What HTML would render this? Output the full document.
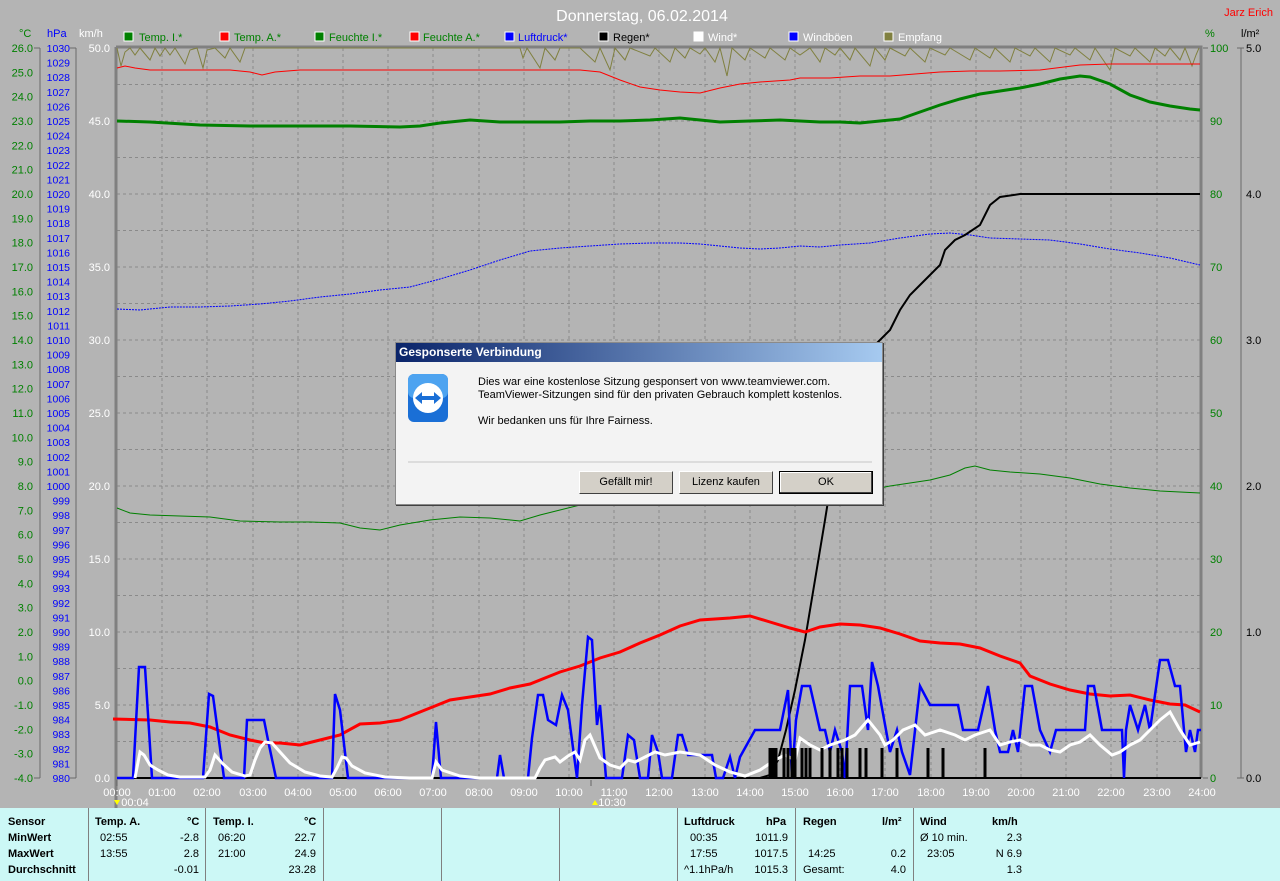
<!DOCTYPE html>
<html><head><meta charset="utf-8"><style>
body{margin:0;width:1280px;height:881px;overflow:hidden;background:#b4b4b4;font-family:"Liberation Sans",sans-serif;}
svg{position:absolute;left:0;top:0}
.panel{position:absolute;left:0;top:808px;width:1280px;height:73px;background:#ccf8f6;font-size:11px;color:#000}
.dv{position:absolute;top:0;width:1px;height:73px;background:#808080}
.t{position:absolute;white-space:nowrap}
.b{font-weight:bold}
.dlg{position:absolute;left:395px;top:342px;width:486px;height:161px;background:#f3f3f3;border:1px solid #8a8a8a;box-shadow:1px 1px 0 #404040;font-size:11px}
.tb{height:19px;background:linear-gradient(90deg,#0a246a,#a6caf0);color:#fff;font-weight:bold;font-size:12px;line-height:19px;padding-left:3px}
.btn{position:absolute;top:128px;width:92px;height:21px;background:#d4d0c8;border:1px solid;border-color:#fff #404040 #404040 #fff;text-align:center;line-height:21px;font-size:11px}
</style></head><body>
<svg width="1280" height="808" font-family="Liberation Sans, sans-serif" font-size="11">
<text x="642" y="21" fill="#fff" font-size="16" text-anchor="middle">Donnerstag, 06.02.2014</text>
<text x="1273" y="16" fill="#f00" font-size="11" text-anchor="end">Jarz Erich</text>
<g font-size="11">
<rect x="124" y="32" width="9" height="9" fill="#008000" stroke="#fff"/><text x="139" y="41" fill="#008000">Temp. I.*</text>
<rect x="220" y="32" width="9" height="9" fill="#f00" stroke="#fff"/><text x="234" y="41" fill="#008000">Temp. A.*</text>
<rect x="315" y="32" width="9" height="9" fill="#008000" stroke="#fff"/><text x="329" y="41" fill="#008000">Feuchte I.*</text>
<rect x="410" y="32" width="9" height="9" fill="#f00" stroke="#fff"/><text x="423" y="41" fill="#008000">Feuchte A.*</text>
<rect x="505" y="32" width="9" height="9" fill="#00f" stroke="#fff"/><text x="518" y="41" fill="#00f">Luftdruck*</text>
<rect x="599" y="32" width="9" height="9" fill="#000" stroke="#fff"/><text x="613" y="41" fill="#000">Regen*</text>
<rect x="694" y="32" width="9" height="9" fill="#fff" stroke="#fff"/><text x="708" y="41" fill="#fff">Wind*</text>
<rect x="789" y="32" width="9" height="9" fill="#00f" stroke="#fff"/><text x="803" y="41" fill="#fff">Windböen</text>
<rect x="884" y="32" width="9" height="9" fill="#808040" stroke="#fff"/><text x="898" y="41" fill="#fff">Empfang</text>
</g>
<text x="19" y="37" fill="#008000">°C</text><text x="47" y="37" fill="#00f">hPa</text><text x="79" y="37" fill="#fff">km/h</text>
<text x="1205" y="37" fill="#008000">%</text><text x="1241" y="37" fill="#000">l/m²</text>
<g stroke="#8a8a8a" stroke-dasharray="3,3" stroke-width="1">
<path d="M117 84.5H1201M117 121H1201M117 157.5H1201M117 194H1201M117 230.5H1201M117 267H1201M117 303.5H1201M117 340H1201M117 376.5H1201M117 413H1201M117 449.5H1201M117 486H1201M117 522.5H1201M117 559H1201M117 595.5H1201M117 632H1201M117 668.5H1201M117 705H1201M117 741.5H1201"/>
<path d="M162 48V778M207 48V778M253 48V778M298 48V778M343 48V778M388 48V778M433 48V778M479 48V778M524 48V778M569 48V778M614 48V778M659 48V778M705 48V778M750 48V778M795 48V778M840 48V778M885 48V778M931 48V778M976 48V778M1021 48V778M1066 48V778M1111 48V778M1157 48V778"/>
</g>
<g stroke="#6a6a6a" fill="none">
<path d="M40 48V778M34 48H40M34 778H40M76 48V778M70 48H76M70 778H76" />
<path d="M1241 48V778M1237 48H1244M1237 778H1244M1203 48H1208M1203 778H1208"/>
</g>
<path d="M116 47V808M116 47H1201V778" stroke="#808080" stroke-width="3" fill="none"/>
<path d="M117 778H1201" stroke="#000" stroke-width="2"/>
<g fill="#008000" text-anchor="end">
<text x="33" y="52">26.0</text><text x="33" y="76.3">25.0</text><text x="33" y="100.7">24.0</text><text x="33" y="125">23.0</text><text x="33" y="149.3">22.0</text><text x="33" y="173.7">21.0</text><text x="33" y="198">20.0</text><text x="33" y="222.3">19.0</text><text x="33" y="246.7">18.0</text><text x="33" y="271">17.0</text><text x="33" y="295.3">16.0</text><text x="33" y="319.7">15.0</text><text x="33" y="344">14.0</text><text x="33" y="368.3">13.0</text><text x="33" y="392.7">12.0</text><text x="33" y="417">11.0</text><text x="33" y="441.3">10.0</text><text x="33" y="465.7">9.0</text><text x="33" y="490">8.0</text><text x="33" y="514.3">7.0</text><text x="33" y="538.7">6.0</text><text x="33" y="563">5.0</text><text x="33" y="587.3">4.0</text><text x="33" y="611.7">3.0</text><text x="33" y="636">2.0</text><text x="33" y="660.3">1.0</text><text x="33" y="684.7">0.0</text><text x="33" y="709">-1.0</text><text x="33" y="733.3">-2.0</text><text x="33" y="757.7">-3.0</text><text x="33" y="782">-4.0</text>
</g>
<g fill="#00f" text-anchor="end" font-size="10.5">
<text x="70" y="52">1030</text><text x="70" y="66.6">1029</text><text x="70" y="81.2">1028</text><text x="70" y="95.8">1027</text><text x="70" y="110.4">1026</text><text x="70" y="125">1025</text><text x="70" y="139.6">1024</text><text x="70" y="154.2">1023</text><text x="70" y="168.8">1022</text><text x="70" y="183.4">1021</text><text x="70" y="198">1020</text><text x="70" y="212.6">1019</text><text x="70" y="227.2">1018</text><text x="70" y="241.8">1017</text><text x="70" y="256.4">1016</text><text x="70" y="271">1015</text><text x="70" y="285.6">1014</text><text x="70" y="300.2">1013</text><text x="70" y="314.8">1012</text><text x="70" y="329.4">1011</text><text x="70" y="344">1010</text><text x="70" y="358.6">1009</text><text x="70" y="373.2">1008</text><text x="70" y="387.8">1007</text><text x="70" y="402.4">1006</text><text x="70" y="417">1005</text><text x="70" y="431.6">1004</text><text x="70" y="446.2">1003</text><text x="70" y="460.8">1002</text><text x="70" y="475.4">1001</text><text x="70" y="490">1000</text><text x="70" y="504.6">999</text><text x="70" y="519.2">998</text><text x="70" y="533.8">997</text><text x="70" y="548.4">996</text><text x="70" y="563">995</text><text x="70" y="577.6">994</text><text x="70" y="592.2">993</text><text x="70" y="606.8">992</text><text x="70" y="621.4">991</text><text x="70" y="636">990</text><text x="70" y="650.6">989</text><text x="70" y="665.2">988</text><text x="70" y="679.8">987</text><text x="70" y="694.4">986</text><text x="70" y="709">985</text><text x="70" y="723.6">984</text><text x="70" y="738.2">983</text><text x="70" y="752.8">982</text><text x="70" y="767.4">981</text><text x="70" y="782">980</text>
</g>
<g fill="#fff" text-anchor="end">
<text x="110" y="52">50.0</text><text x="110" y="125">45.0</text><text x="110" y="198">40.0</text><text x="110" y="271">35.0</text><text x="110" y="344">30.0</text><text x="110" y="417">25.0</text><text x="110" y="490">20.0</text><text x="110" y="563">15.0</text><text x="110" y="636">10.0</text><text x="110" y="709">5.0</text><text x="110" y="782">0.0</text>
</g>
<g fill="#008000">
<text x="1210" y="52">100</text><text x="1210" y="125">90</text><text x="1210" y="198">80</text><text x="1210" y="271">70</text><text x="1210" y="344">60</text><text x="1210" y="417">50</text><text x="1210" y="490">40</text><text x="1210" y="563">30</text><text x="1210" y="636">20</text><text x="1210" y="709">10</text><text x="1210" y="782">0</text>
</g>
<g fill="#000">
<text x="1246" y="52">5.0</text><text x="1246" y="198">4.0</text><text x="1246" y="344">3.0</text><text x="1246" y="490">2.0</text><text x="1246" y="636">1.0</text><text x="1246" y="782">0.0</text>
</g>
<g fill="#fff" text-anchor="middle">
<text x="117" y="796">00:00</text><text x="162" y="796">01:00</text><text x="207" y="796">02:00</text><text x="253" y="796">03:00</text><text x="298" y="796">04:00</text><text x="343" y="796">05:00</text><text x="388" y="796">06:00</text><text x="433" y="796">07:00</text><text x="479" y="796">08:00</text><text x="524" y="796">09:00</text><text x="569" y="796">10:00</text><text x="614" y="796">11:00</text><text x="659" y="796">12:00</text><text x="705" y="796">13:00</text><text x="750" y="796">14:00</text><text x="795" y="796">15:00</text><text x="840" y="796">16:00</text><text x="885" y="796">17:00</text><text x="931" y="796">18:00</text><text x="976" y="796">19:00</text><text x="1021" y="796">20:00</text><text x="1066" y="796">21:00</text><text x="1111" y="796">22:00</text><text x="1157" y="796">23:00</text><text x="1202" y="796">24:00</text>
<text x="135" y="806">00:04</text><text x="612" y="806">10:30</text>
</g>
<path d="M114 800l3 5 3-5z" fill="#ff0"/><path d="M592 805l3-5 3 5z" fill="#ff0"/>
<path d="M117 780v6M591 780v6" stroke="#666"/>
<polyline fill="none" stroke="#808040" points="117,48 121,66 125,52 130,48 135,55 140,48 150,60 155,48 160,56 165,48 170,55 175,48 185,64 190,50 197,48 203,68 207,50 215,48 225,58 230,48 240,62 245,48 270,48 290,48 300,48 320,48 340,48 400,48 420,48 430,48 450,48 520,48 523,58 527,48 540,68 545,48 555,60 560,48 580,48 595,62 600,48 610,70 615,48 625,60 630,48 650,56 655,48 670,62 675,48 685,58 690,48 700,54 705,48 715,62 720,48 727,76 732,48 745,60 750,48 765,58 770,48 785,60 790,48 800,55 810,48 820,62 825,48 835,55 840,48 850,60 855,48 870,66 875,48 885,60 890,48 905,56 910,48 925,62 930,48 945,55 950,48 970,60 975,48 990,58 995,48 1010,62 1015,48 1030,56 1035,48 1050,62 1055,48 1070,55 1075,48 1090,60 1095,48 1110,70 1115,48 1130,56 1135,48 1150,62 1155,48 1165,56 1170,48 1180,60 1185,48 1192,66 1196,55 1199,48"/>
<polyline fill="none" stroke="#f00" points="117,68 125,66 135,68 150,70 200,70 230,70 250,72 262,75 275,72 300,70 330,70 400,70 580,70 600,72 620,80 640,87 660,90 680,92 700,93 720,88 740,84 760,82 790,80 800,78 830,78 860,76 890,76 915,74 940,72 970,71 1000,71 1040,70 1080,65 1110,64 1200,64"/>
<polyline fill="none" stroke="#008000" stroke-width="3" points="117,121 150,122 200,125 250,126 300,126 350,126 400,127 420,126 440,123 470,120 500,122 530,122 560,122 590,121 620,121 650,120 680,118 700,120 720,122 750,121 780,120 800,121 820,122 840,122 860,123 880,121 900,119 920,112 940,105 960,99 980,94 1000,91 1020,88 1040,84 1060,79 1080,76 1090,77 1110,84 1130,95 1150,102 1170,106 1190,109 1200,110"/>
<polyline fill="none" stroke="#00f" stroke-dasharray="2,1" points="117,309 140,310 170,307 200,307 230,306 260,304 290,301 320,297 350,294 380,290 410,287 440,279 470,270 500,260 530,251 560,248 590,246 620,244 650,243 680,243 700,244 720,246 740,248 760,249 780,248 800,246 820,247 840,245 870,243 900,238 930,234 950,233 970,235 990,238 1020,239 1050,240 1080,244 1110,249 1140,253 1170,258 1200,265"/>
<polyline fill="none" stroke="#008000" points="117,508 130,513 150,515 180,516 210,517 240,521 280,522 310,522 340,523 360,528 380,530 400,525 430,520 460,517 490,518 520,521 540,515 560,510 580,505 600,500 840,495 870,490 890,486 910,483 930,480 950,475 965,468 975,466 990,470 1010,472 1040,474 1070,478 1100,484 1130,488 1160,491 1200,493"/>
<polyline fill="none" stroke="#000" stroke-width="2" points="117,778 760,778 770,775 778,760 786,730 795,690 805,640 815,580 825,520 833,470 840,420 850,380 860,360 875,345 890,330 900,310 910,295 920,285 930,275 940,265 945,250 955,240 965,235 980,225 990,205 1000,197 1020,194 1200,194"/>
<polyline fill="none" stroke="#f00" stroke-width="3" points="113,719 150,720 170,722 190,723 210,727 230,735 250,740 265,743 280,743 300,745 320,740 340,735 360,724 380,723 400,720 420,712 435,706 450,700 470,697 490,694 510,688 530,684 545,678 560,672 580,666 600,658 620,652 640,643 660,635 680,626 700,620 730,618 750,616 770,622 790,628 805,632 820,627 840,624 860,625 880,628 900,634 920,641 940,643 960,644 980,648 1000,656 1020,663 1030,676 1050,684 1070,690 1090,694 1110,696 1130,695 1150,700 1170,704 1185,705 1200,712"/>
<polyline fill="none" stroke="#00f" stroke-width="2.5" points="117,778 133,778 139,667 145,667 152,778 203,778 209,694 213,696 224,778 244,778 247,720 264,720 269,745 276,778 332,778 335,694 340,710 348,778 432,778 436,722 441,778 497,778 500,755 504,778 528,778 532,738 538,695 543,695 548,720 556,725 562,695 568,710 577,778 582,705 588,637 592,640 597,725 600,705 606,778 622,778 628,735 634,740 640,778 648,778 652,735 658,752 662,778 672,778 678,735 682,735 688,755 712,755 716,778 723,778 730,757 735,778 740,757 755,730 780,730 788,690 792,778 796,720 802,686 810,686 820,730 825,730 830,752 835,730 842,752 845,778 850,686 862,686 868,730 872,662 878,686 890,752 897,730 902,752 910,775 920,686 930,705 958,705 963,730 978,730 988,686 995,730 1000,752 1008,752 1013,730 1018,752 1025,686 1032,686 1040,730 1050,752 1056,730 1085,730 1088,686 1094,686 1102,730 1122,730 1124,778 1126,730 1130,705 1138,730 1145,705 1150,730 1160,660 1168,660 1175,686 1180,686 1186,752 1190,730 1195,752 1198,730 1201,730"/>
<polyline fill="none" stroke="#fff" stroke-width="3" points="135,778 140,752 144,755 150,765 158,770 168,775 180,777 205,777 210,770 215,755 222,763 232,772 245,776 250,775 255,760 260,748 265,742 272,743 280,752 290,763 305,772 320,776 332,777 337,768 342,757 346,758 352,766 365,773 385,777 410,778 432,778 436,762 442,770 460,776 480,778 535,778 540,768 545,760 555,757 560,762 568,756 575,752 580,760 585,740 590,735 600,758 610,765 620,768 628,760 635,762 645,757 655,752 665,755 680,752 700,755 715,765 730,772 745,776 760,770 775,760 785,755 795,760 800,738 810,745 820,750 830,745 845,740 855,735 868,720 880,735 885,745 893,740 903,730 915,725 925,735 940,730 955,735 965,740 975,735 990,730 1000,745 1010,742 1020,740 1030,745 1040,745 1050,750 1060,752 1070,745 1080,742 1090,735 1100,745 1112,755 1120,752 1130,745 1140,740 1150,730 1160,720 1170,712 1180,730 1190,745 1200,742"/>
<g stroke="#000" stroke-width="3">
<path d="M770 748V778M773 748V778M776 748V778M784 748V778M788 748V778M792 748V778M795 748V778M802 748V778M806 748V778M810 748V778M822 748V778M830 748V778M838 748V778M842 748V778M847 748V778M860 748V778M866 748V778M882 748V778M897 748V778M928 748V778M943 748V778M985 748V778"/>
</g>
</svg>

<div class="dlg">
<div class="tb">Gesponserte Verbindung</div>
<svg width="50" height="60" style="left:9px;top:28px;position:absolute">
<rect x="3" y="3" width="40" height="48" rx="6" fill="#1a6fd6"/>
<rect x="3" y="3" width="40" height="24" rx="6" fill="#4da3f0"/>
<circle cx="23" cy="27" r="15" fill="#fff"/>
<path d="M10 27l7-6v4h12v-4l7 6-7 6v-4H17v4z" fill="#1a6fd6"/>
</svg>
<div class="t" style="left:82px;top:33px">Dies war eine kostenlose Sitzung gesponsert von www.teamviewer.com.</div>
<div class="t" style="left:82px;top:46px">TeamViewer-Sitzungen sind für den privaten Gebrauch komplett kostenlos.</div>
<div class="t" style="left:82px;top:72px">Wir bedanken uns für Ihre Fairness.</div>
<div style="position:absolute;left:12px;top:118px;width:464px;height:2px;background:#dcdcdc"></div>
<div class="btn" style="left:183px">Gefällt mir!</div>
<div class="btn" style="left:283px">Lizenz kaufen</div>
<div class="btn" style="left:383px;border:1px solid #000;box-shadow:inset -1px -1px #404040,inset 1px 1px #fff">OK</div>
</div>

<div class="panel">
<div class="dv" style="left:88px"></div><div class="dv" style="left:205px"></div><div class="dv" style="left:323px"></div><div class="dv" style="left:441px"></div><div class="dv" style="left:559px"></div><div class="dv" style="left:677px"></div><div class="dv" style="left:795px"></div><div class="dv" style="left:913px"></div>
<div class="t b" style="left:8px;top:8px">Sensor</div><div class="t b" style="left:8px;top:24px">MinWert</div><div class="t b" style="left:8px;top:40px">MaxWert</div><div class="t b" style="left:8px;top:56px">Durchschnitt</div>
<div class="t b" style="left:95px;top:8px">Temp. A.</div><div class="t b" style="left:187px;top:8px">°C</div>
<div class="t" style="left:100px;top:24px">02:55</div><div class="t" style="right:1081px;top:24px">-2.8</div>
<div class="t" style="left:100px;top:40px">13:55</div><div class="t" style="right:1081px;top:40px">2.8</div>
<div class="t" style="right:1081px;top:56px">-0.01</div>
<div class="t b" style="left:213px;top:8px">Temp. I.</div><div class="t b" style="left:304px;top:8px">°C</div>
<div class="t" style="left:218px;top:24px">06:20</div><div class="t" style="right:964px;top:24px">22.7</div>
<div class="t" style="left:218px;top:40px">21:00</div><div class="t" style="right:964px;top:40px">24.9</div>
<div class="t" style="right:964px;top:56px">23.28</div>
<div class="t b" style="left:684px;top:8px">Luftdruck</div><div class="t b" style="left:766px;top:8px">hPa</div>
<div class="t" style="left:690px;top:24px">00:35</div><div class="t" style="right:492px;top:24px">1011.9</div>
<div class="t" style="left:690px;top:40px">17:55</div><div class="t" style="right:492px;top:40px">1017.5</div>
<div class="t" style="left:684px;top:56px">^1.1hPa/h</div><div class="t" style="right:492px;top:56px">1015.3</div>
<div class="t b" style="left:803px;top:8px">Regen</div><div class="t b" style="left:882px;top:8px">l/m²</div>
<div class="t" style="left:808px;top:40px">14:25</div><div class="t" style="right:374px;top:40px">0.2</div>
<div class="t" style="left:803px;top:56px">Gesamt:</div><div class="t" style="right:374px;top:56px">4.0</div>
<div class="t b" style="left:920px;top:8px">Wind</div><div class="t b" style="left:992px;top:8px">km/h</div>
<div class="t" style="left:920px;top:24px">Ø 10 min.</div><div class="t" style="right:258px;top:24px">2.3</div>
<div class="t" style="left:927px;top:40px">23:05</div><div class="t" style="right:258px;top:40px">N 6.9</div>
<div class="t" style="right:258px;top:56px">1.3</div>
</div>
</body></html>
